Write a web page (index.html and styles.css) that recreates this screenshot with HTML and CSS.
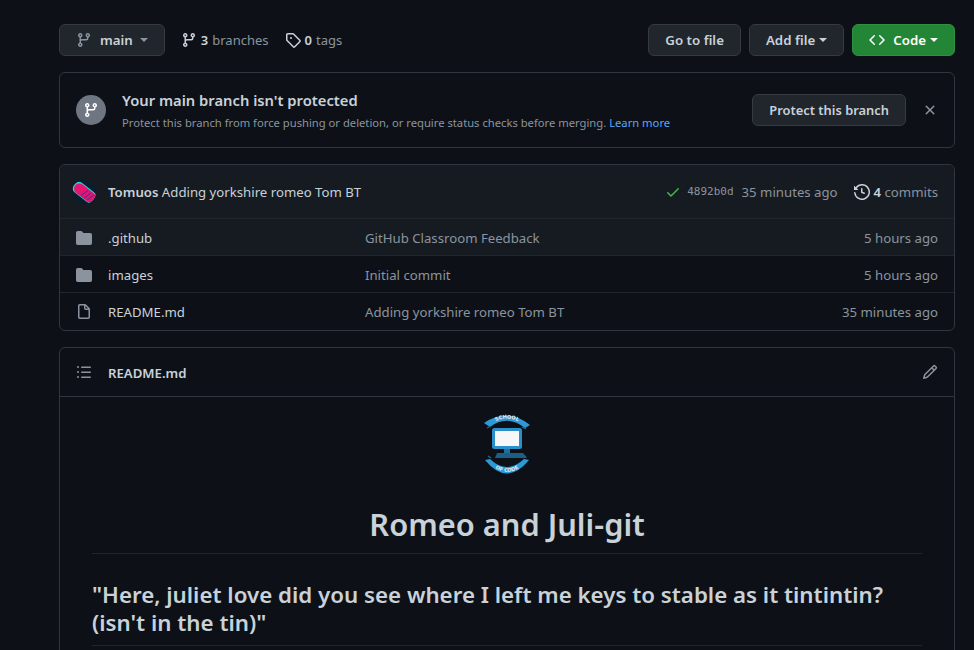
FILE: index.html
```html
<!DOCTYPE html>
<html>
	<head>
		<title>Romeo and Juli-git</title>
		<link rel="stylesheet" href="styles.css">
	</head>
	<body>
		<svg class="defs" width="0" height="0">
			<symbol id="i-branch" viewBox="0 0 16 16"><path fill-rule="evenodd" d="M11.75 2.5a.75.75 0 100 1.5.75.75 0 000-1.5zm-2.25.75a2.25 2.25 0 113 2.122V6A2.5 2.5 0 0110 8.5H6a1 1 0 00-1 1v1.128a2.251 2.251 0 11-1.5 0V5.372a2.25 2.25 0 111.5 0v1.836A2.492 2.492 0 016 7h4a1 1 0 001-1v-.628A2.25 2.25 0 019.5 3.25zM4.25 12a.75.75 0 100 1.5.75.75 0 000-1.5zM3.5 3.25a.75.75 0 111.5 0 .75.75 0 01-1.5 0z"/></symbol>
			<symbol id="i-folder" viewBox="0 0 16 16"><path d="M1.75 1A1.75 1.75 0 000 2.75v10.5C0 14.216.784 15 1.75 15h12.5A1.75 1.75 0 0016 13.25v-8.5A1.75 1.75 0 0014.25 3H7.5a.25.25 0 01-.2-.1l-.9-1.2C6.07 1.26 5.55 1 5 1H1.75z"/></symbol>
			<symbol id="i-file" viewBox="0 0 16 16"><path fill-rule="evenodd" d="M3.75 1.5a.25.25 0 00-.25.25v11.5c0 .138.112.25.25.25h8.5a.25.25 0 00.25-.25V6H9.75A1.75 1.75 0 018 4.25V1.5H3.75zm5.75.56v2.19c0 .138.112.25.25.25h2.19L9.5 2.06zM2 1.75C2 .784 2.784 0 3.75 0h5.086c.464 0 .909.184 1.237.513l3.414 3.414c.329.328.513.773.513 1.237v8.086A1.75 1.75 0 0112.25 15h-8.5A1.75 1.75 0 012 13.25V1.75z"/></symbol>
		</svg>

		<div class="repo">
			<div class="topbar">
				<button class="btn branch-btn">
					<svg class="icon muted-icon" viewBox="0 0 16 16"><use href="#i-branch"/></svg>
					<span class="branch-name">main</span>
					<span class="caret caret-muted"></span>
				</button>
				<a class="count">
					<svg class="icon" viewBox="0 0 16 16"><use href="#i-branch"/></svg>
					<b>3</b> <span>branches</span>
				</a>
				<a class="count">
					<svg class="icon" viewBox="0 0 16 16"><path fill-rule="evenodd" d="M2.5 7.775V2.75a.25.25 0 01.25-.25h5.025a.25.25 0 01.177.073l6.25 6.25a.25.25 0 010 .354l-5.025 5.025a.25.25 0 01-.354 0l-6.25-6.25a.25.25 0 01-.073-.177zm-1.5 0V2.75C1 1.784 1.784 1 2.75 1h5.025c.464 0 .91.184 1.238.513l6.25 6.25a1.75 1.75 0 010 2.474l-5.026 5.026a1.75 1.75 0 01-2.474 0l-6.25-6.25A1.75 1.75 0 011 7.775zM6 5a1 1 0 100 2 1 1 0 000-2z"/></svg>
					<b>0</b> <span>tags</span>
				</a>
				<div class="topbar-right">
					<button class="btn">Go to file</button>
					<button class="btn">Add file <span class="caret"></span></button>
					<button class="btn btn-green">
						<svg class="icon" viewBox="0 0 16 16"><path fill-rule="evenodd" d="M4.72 3.22a.75.75 0 011.06 1.06L2.06 8l3.72 3.72a.75.75 0 11-1.06 1.06L.47 8.53a.75.75 0 010-1.06l4.25-4.25zm6.56 0a.75.75 0 10-1.06 1.06L13.94 8l-3.72 3.72a.75.75 0 101.06 1.06l4.25-4.25a.75.75 0 000-1.06l-4.25-4.25z"/></svg>
						Code <span class="caret"></span>
					</button>
				</div>
			</div>

			<div class="box protect">
				<div class="protect-badge">
					<svg class="icon" viewBox="0 0 16 16"><use href="#i-branch"/></svg>
				</div>
				<div class="protect-text">
					<h3>Your main branch isn't protected</h3>
					<p>Protect this branch from force pushing or deletion, or require status checks before merging. <a href="#">Learn more</a></p>
				</div>
				<button class="btn btn-protect">Protect this branch</button>
				<svg class="icon close-icon" viewBox="0 0 16 16"><path fill-rule="evenodd" d="M3.72 3.72a.75.75 0 011.06 0L8 6.94l3.22-3.22a.75.75 0 111.06 1.06L9.06 8l3.22 3.22a.75.75 0 11-1.06 1.06L8 9.06l-3.22 3.22a.75.75 0 01-1.06-1.06L6.94 8 3.72 4.78a.75.75 0 010-1.06z"/></svg>
			</div>

			<div class="box files">
				<div class="commit-row">
					<svg class="avatar" viewBox="0 0 24 24">
						<clipPath id="avatar-clip"><circle cx="12" cy="12" r="12"/></clipPath>
						<g clip-path="url(#avatar-clip)">
							<rect width="24" height="24" fill="#0b1d2a"/>
							<rect x="-1" y="6" width="27" height="12" rx="6" transform="rotate(38 12 12)" fill="#17d8e6"/>
							<rect x="1" y="7" width="25" height="10.5" rx="5.2" transform="rotate(38 12 12)" fill="#e8146f"/>
							<path d="M12 18l7-5M15 20l7-5M9 15.5l7-5" stroke="#6d2a8f" stroke-width="1.4"/>
						</g>
					</svg>
					<span class="commit-msg"><b>Tomuos</b> Adding yorkshire romeo Tom BT</span>
					<svg class="icon check-icon" viewBox="0 0 16 16"><path fill-rule="evenodd" d="M13.78 4.22a.75.75 0 010 1.06l-7.25 7.25a.75.75 0 01-1.06 0L2.22 9.28a.75.75 0 011.06-1.06L6 10.94l6.72-6.72a.75.75 0 011.06 0z"/></svg>
					<span class="sha">4892b0d</span>
					<span class="commit-age">35 minutes ago</span>
					<svg class="icon history-icon" viewBox="0 0 16 16"><path fill-rule="evenodd" d="M1.643 3.143L.427 1.927A.25.25 0 000 2.104V5.75c0 .138.112.25.25.25h3.646a.25.25 0 00.177-.427L2.715 4.215a6.5 6.5 0 11-1.18 4.458.75.75 0 10-1.493.154 8.001 8.001 0 101.6-5.684zM7.75 4a.75.75 0 01.75.75v2.992l2.028.812a.75.75 0 01-.557 1.392l-2.5-1A.75.75 0 017 8.25v-3.5A.75.75 0 017.75 4z"/></svg>
					<span class="commit-total"><b>4</b> commits</span>
				</div>
				<div class="file-row file-row-hover">
					<svg class="icon file-icon" viewBox="0 0 16 16"><use href="#i-folder"/></svg>
					<span class="file-name">.github</span>
					<span class="file-msg">GitHub Classroom Feedback</span>
					<span class="file-age">5 hours ago</span>
				</div>
				<div class="file-row">
					<svg class="icon file-icon" viewBox="0 0 16 16"><use href="#i-folder"/></svg>
					<span class="file-name">images</span>
					<span class="file-msg">Initial commit</span>
					<span class="file-age">5 hours ago</span>
				</div>
				<div class="file-row">
					<svg class="icon file-icon" viewBox="0 0 16 16"><use href="#i-file"/></svg>
					<span class="file-name">README.md</span>
					<span class="file-msg">Adding yorkshire romeo Tom BT</span>
					<span class="file-age">35 minutes ago</span>
				</div>
			</div>

			<div class="box readme">
				<div class="readme-head">
					<svg class="icon list-icon" viewBox="0 0 16 16"><path fill-rule="evenodd" d="M2 4a1 1 0 100-2 1 1 0 000 2zm3.75-1.5a.75.75 0 000 1.5h8.5a.75.75 0 000-1.5h-8.5zm0 5a.75.75 0 000 1.5h8.5a.75.75 0 000-1.5h-8.5zm0 5a.75.75 0 000 1.5h8.5a.75.75 0 000-1.5h-8.5zM3 8a1 1 0 11-2 0 1 1 0 012 0zm-1 6a1 1 0 100-2 1 1 0 000 2z"/></svg>
					<b class="readme-title">README.md</b>
					<svg class="icon pencil-icon" viewBox="0 0 16 16"><path fill-rule="evenodd" d="M11.013 1.427a1.75 1.75 0 012.474 0l1.086 1.086a1.75 1.75 0 010 2.474l-8.61 8.61c-.21.21-.47.364-.756.445l-3.251.93a.75.75 0 01-.927-.928l.929-3.25a1.75 1.75 0 01.445-.758l8.61-8.61zm1.414 1.06a.25.25 0 00-.354 0L10.811 3.75l1.439 1.44 1.263-1.263a.25.25 0 000-.354l-1.086-1.086zM11.189 6.25L9.75 4.81l-6.286 6.287a.25.25 0 00-.064.108l-.558 1.953 1.953-.558a.249.249 0 00.108-.064l6.286-6.286z"/></svg>
				</div>
				<div class="readme-body">
					<svg class="logo" viewBox="0 0 46 62">
						<path d="M0 10Q23 -6 46 12L41 15Q23 1 6 14Z" fill="#2b9ad6"/>
						<path d="M1 47Q23 74 45 47L40 46Q23 62 6 46Z" fill="#2b9ad6"/>
						<path d="M3 15l4-2M42 16l-4-2M4 43l3 2M42 43l-3 2" stroke="#1c6f9e" stroke-width="1.2"/>
						<rect x="9.5" y="16.5" width="27" height="18" rx="1" fill="#f6f7f8" stroke="#2b8fc9" stroke-width="3"/>
						<rect x="20" y="36" width="6" height="4" fill="#1c6f9e"/>
						<path d="M13 40h26l4 5H11z" fill="#1c5f86"/>
						<path id="logo-top" d="M6 12Q23 -1 40 12" fill="none"/>
						<path id="logo-bottom" d="M7 52Q23 66 39 52" fill="none"/>
						<text class="logo-text"><textPath href="#logo-top" startOffset="50%" text-anchor="middle">SCHOOL</textPath></text>
						<text class="logo-text"><textPath href="#logo-bottom" startOffset="50%" text-anchor="middle">OF CODE</textPath></text>
					</svg>
					<h1>Romeo and Juli-git</h1>
					<h2>"Here, juliet love did you see where I left me keys to stable as it tintintin? (isn't in the tin)"</h2>
				</div>
			</div>
		</div>
	</body>
</html>
```

FILE: styles.css
```css
html, body {
	height: 650px;
	overflow: hidden;
}
body {
	margin: 0;
	background-color: #0d1117;
	color: #c9d1d9;
	font-family: "Noto Sans", "Open Sans", sans-serif;
	font-size: 13.2px;
}
.defs {
	position: absolute;
}
.repo {
	width: 896px;
	margin-left: 59px;
	padding-top: 24px;
}
.icon {
	width: 16px;
	height: 16px;
	fill: currentColor;
	flex: none;
}
b {
	font-weight: 600;
}

.btn {
	display: inline-flex;
	align-items: center;
	height: 32px;
	padding: 0 16px;
	border: 1px solid #363b42;
	border-radius: 6px;
	background: #21262d;
	color: #c9d1d9;
	font-family: inherit;
	font-size: 13.3px;
	font-weight: 600;
	white-space: nowrap;
}
.btn-green {
	background: #238636;
	border-color: #2c9140;
	color: #fff;
}
.btn-green .icon {
	margin-right: 8px;
}
.btn-protect {
	font-size: 12.9px;
}
.caret {
	display: inline-block;
	width: 0;
	height: 0;
	margin-left: 4px;
	border-top: 4px solid currentColor;
	border-left: 4px solid transparent;
	border-right: 4px solid transparent;
}
.caret-muted {
	color: #8b949e;
	margin-left: 7px;
}

.topbar {
	display: flex;
	align-items: center;
	height: 32px;
}
.branch-btn .muted-icon {
	color: #8b949e;
	margin-right: 8px;
}
.branch-name {
	font-weight: 600;
}
.count {
	display: flex;
	align-items: center;
	gap: 4px;
	margin-left: 16px;
	color: #8b949e;
	font-size: 13px;
}
.count .icon {
	color: #c9d1d9;
}
.count b {
	color: #c9d1d9;
}
.topbar-right {
	display: flex;
	gap: 8px;
	margin-left: auto;
}

.box {
	border: 1px solid #30363d;
	border-radius: 6px;
	margin-top: 16px;
}
.protect {
	display: flex;
	align-items: center;
	height: 74px;
	padding: 0 16px;
}
.protect-badge {
	display: flex;
	align-items: center;
	justify-content: center;
	width: 30px;
	height: 30px;
	border-radius: 50%;
	background: #6e7681;
	color: #fff;
	margin-right: 16px;
}
.protect-text {
	flex: 1;
	padding-top: 1px;
}
.protect-text h3 {
	margin: 0;
	font-size: 14.75px;
	font-weight: 600;
	line-height: 20px;
}
.protect-text p {
	margin: 5px 0 0;
	font-size: 11.23px;
	line-height: 16px;
	color: #8b949e;
}
.protect-text a {
	color: #58a6ff;
	text-decoration: none;
}
.close-icon {
	color: #8b949e;
	margin-left: 16px;
}

.commit-row {
	display: flex;
	align-items: center;
	height: 53px;
	padding: 0 16px 0 12px;
	background: #161b22;
	border-bottom: 1px solid #21262d;
	border-radius: 6px 6px 0 0;
}
.avatar {
	width: 24px;
	height: 24px;
	margin-right: 12px;
	flex: none;
}
.commit-msg {
	flex: 1;
}
.check-icon {
	color: #3fb950;
	margin-right: 6px;
}
.sha {
	font-family: "DejaVu Sans Mono", "Liberation Mono", monospace;
	font-size: 11px;
	color: #8b949e;
	margin-right: 8px;
}
.commit-age {
	color: #8b949e;
}
.history-icon {
	margin-left: 16px;
	margin-right: 4px;
}
.commit-total {
	color: #8b949e;
}
.commit-total b {
	color: #c9d1d9;
}

.file-row {
	display: flex;
	align-items: center;
	height: 35px;
	padding: 1px 16px 0;
	border-bottom: 1px solid #21262d;
}
.file-row:last-child {
	border-bottom: 0;
	height: 37px;
	padding-top: 0;
}
.file-row-hover {
	background: #161b22;
}
.file-icon {
	color: #8b949e;
	margin-right: 16px;
}
.file-name {
	width: 257px;
	flex: none;
}
.file-msg {
	flex: 1;
	color: #8b949e;
}
.file-age {
	color: #8b949e;
}

.readme-head {
	display: flex;
	align-items: center;
	height: 48px;
	padding: 0 16px;
	border-bottom: 1px solid #30363d;
}
.readme-title {
	padding-top: 1px;
}
.list-icon {
	color: #8b949e;
	margin-right: 16px;
}
.pencil-icon {
	color: #8b949e;
	margin-left: auto;
}
.readme-body {
	padding: 16px 32px;
	text-align: center;
}
.logo {
	display: block;
	width: 46px;
	height: 62px;
	margin: 0 auto;
}
.logo-text {
	font-family: "DejaVu Sans", sans-serif;
	font-size: 5px;
	font-weight: 700;
	fill: #e6edf3;
}
.readme-body h1 {
	margin: 29px 0 0;
	padding-bottom: 9px;
	font-size: 30.8px;
	font-weight: 600;
	line-height: 40px;
	border-bottom: 1px solid #21262d;
}
.readme-body h2 {
	margin: 27px 0 0;
	padding-bottom: 8px;
	font-size: 22.3px;
	font-weight: 600;
	line-height: 28px;
	text-align: left;
	border-bottom: 1px solid #21262d;
}
```
